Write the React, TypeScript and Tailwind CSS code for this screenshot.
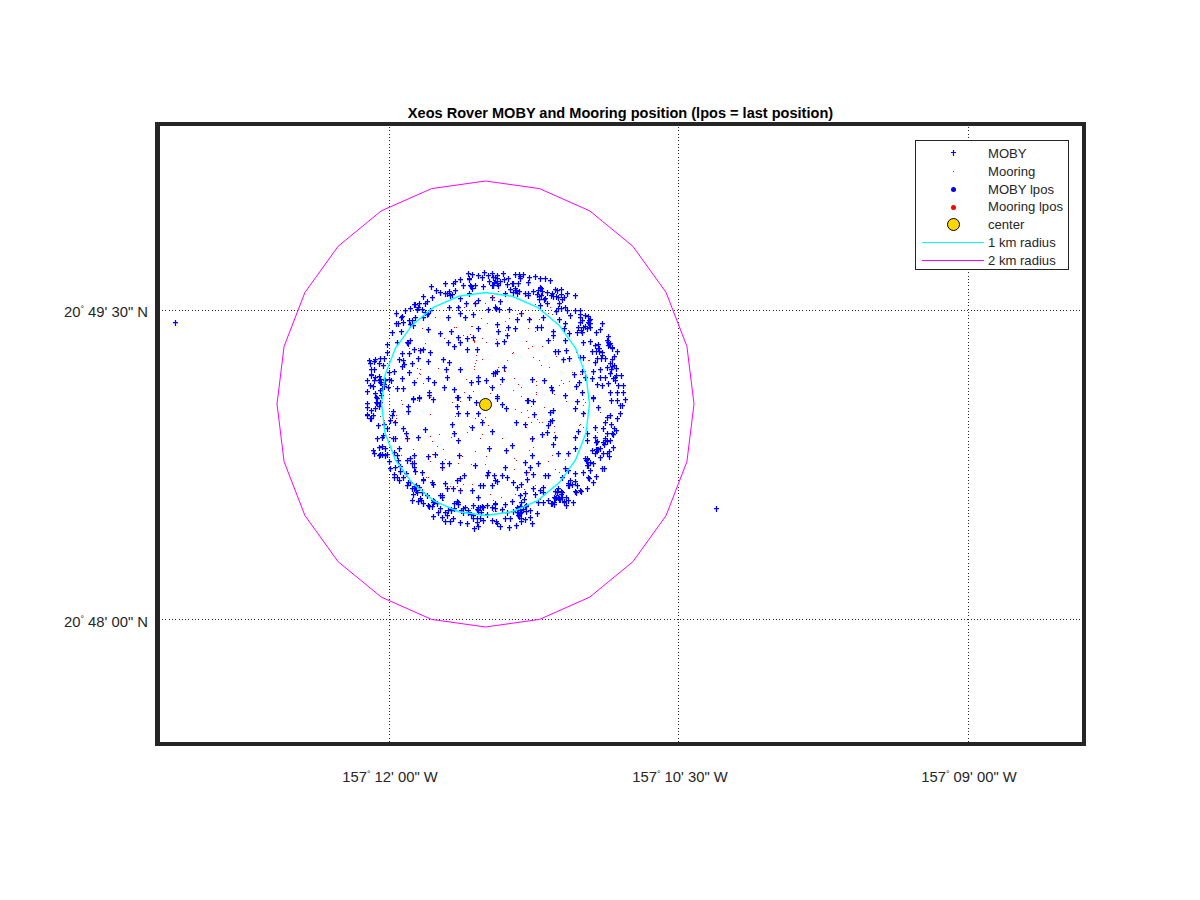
import React from 'react';

type Pt = [number, number];

// Positions read off the plot, stored per quadrant (3x crop coords)
const q1: Pt[] = [[265,172],[355,205],[272,213],[240,220],[293,232],[300,245],[322,235],[340,232],[265,247],[283,258],[322,268],[350,268],[250,297],[268,307],[203,304],[258,327],[300,327],[262,350],[205,355],[163,367],[222,367],[253,380],[282,388],[208,395],[332,365],[355,352],[355,362],[377,360],[395,380],[412,332],[405,340],[292,410],[328,412],[415,212],[412,250],[300,158],[316,172],[340,162],[385,146],[408,143],[345,128],[355,120],[318,128],[295,140],[268,140],[175,295],[130,300],[118,298],[127,318],[133,312],[155,310],[148,337],[103,333],[88,337],[43,327],[58,348],[127,353],[93,360],[130,385],[112,385],[85,380],[88,358],[60,365],[40,378],[30,375],[20,392],[45,398],[48,412],[160,415],[178,412],[208,405],[122,170],[108,188],[130,185],[150,192],[165,170],[190,107],[178,130],[195,130],[200,122],[150,145],[170,147],[186,148],[215,110],[228,90],[240,95],[256,68],[278,70],[285,62],[300,58],[325,40],[310,75],[330,75],[345,75],[355,45],[365,50],[373,35],[385,45],[400,50],[410,45],[395,75],[410,70],[255,100],[270,105],[285,90],[300,115],[190,170],[203,208],[145,250],[140,245],[150,240],[80,252],[112,245],[95,215],[122,212],[113,188],[80,277],[127,278],[148,280],[163,267],[180,270],[188,268],[211,277],[60,295],[73,295],[57,308],[70,315]];
const q2: Pt[] = [[5,40],[15,50],[40,38],[75,42],[100,42],[118,50],[135,48],[150,55],[165,55],[180,60],[8,75],[25,75],[50,72],[85,68],[115,65],[130,92],[150,80],[172,95],[200,90],[195,88],[205,110],[230,100],[215,118],[165,115],[105,100],[45,98],[5,112],[30,123],[15,142],[28,148],[58,148],[92,158],[118,178],[82,178],[160,172],[208,178],[22,192],[55,202],[75,205],[140,202],[152,202],[25,213],[52,225],[43,243],[190,213],[190,225],[175,240],[225,190],[222,205],[225,240],[237,218],[240,165],[255,150],[270,150],[285,165],[270,185],[262,215],[290,205],[318,215],[330,208],[280,247],[195,272],[205,272],[228,270],[218,298],[238,295],[270,290],[280,290],[325,252],[350,240],[355,255],[365,265],[335,285],[320,293],[345,295],[365,298],[315,305],[308,332],[330,328],[352,320],[378,325],[275,332],[253,342],[285,350],[268,365],[258,377],[307,355],[330,350],[360,340],[345,352],[320,372],[335,375],[355,370],[375,360],[385,375],[400,375],[15,335],[10,340],[43,322],[37,358],[5,380],[125,357],[163,360],[183,380],[185,390],[20,408],[110,420],[225,140],[230,150],[170,130],[205,145],[150,135],[360,395],[380,395],[400,395],[310,410],[275,395]];
const q3: Pt[] = [[22,25],[50,10],[160,13],[178,10],[220,13],[293,7],[328,7],[347,22],[290,32],[145,33],[145,48],[293,55],[322,55],[355,55],[275,87],[365,80],[335,97],[395,108],[283,115],[295,135],[388,158],[196,103],[130,98],[138,115],[140,130],[175,127],[105,128],[55,90],[52,130],[70,120],[58,155],[75,160],[65,178],[80,178],[118,160],[103,170],[110,180],[115,195],[88,197],[163,180],[203,183],[226,177],[298,180],[150,190],[140,195],[245,205],[268,205],[345,210],[245,215],[90,220],[105,215],[120,213],[120,228],[103,238],[110,245],[130,245],[138,233],[165,228],[185,230],[190,255],[215,262],[220,268],[150,260],[140,270],[155,280],[160,297],[170,290],[180,310],[185,290],[200,300],[157,315],[175,318],[190,325],[205,330],[220,320],[230,325],[245,300],[255,265],[280,280],[262,280],[300,285],[335,285],[313,240],[300,250],[290,255],[380,240],[385,230],[403,240],[370,270],[360,270],[395,270],[412,258],[355,305],[340,330],[380,330],[405,325],[295,327],[310,340],[325,345],[240,340],[255,350],[265,345],[220,363],[235,350],[245,365],[260,360],[280,370],[300,380],[320,385],[340,370],[350,380],[370,375],[395,375],[408,378],[255,378],[270,378],[45,40],[40,60],[30,70],[100,48],[95,60],[90,75],[105,82],[80,100]];
const q4: Pt[] = [[20,8],[35,28],[48,40],[113,15],[128,18],[133,58],[78,82],[105,87],[180,52],[190,45],[225,0],[262,18],[255,40],[280,55],[310,8],[325,35],[362,15],[380,15],[395,30],[360,60],[350,65],[380,70],[390,55],[345,80],[315,95],[340,100],[365,115],[345,130],[368,155],[180,78],[185,75],[175,90],[172,112],[157,117],[127,130],[5,108],[67,150],[48,165],[190,147],[195,127],[255,125],[265,108],[290,115],[315,125],[290,135],[255,160],[235,175],[205,173],[125,180],[105,200],[145,205],[120,215],[108,230],[45,215],[12,240],[35,240],[50,245],[15,255],[5,270],[130,238],[165,240],[175,240],[110,252],[70,262],[93,268],[80,275],[130,280],[160,275],[150,285],[215,245],[235,270],[255,258],[270,285],[290,280],[260,270],[215,290],[205,280],[330,160],[305,165],[350,175],[330,185],[300,200],[342,220],[310,205],[280,230],[255,235],[235,225],[225,220],[90,300],[105,295],[135,297],[160,290],[175,315],[185,325],[215,305],[250,320],[103,313],[65,318],[45,328],[15,327],[35,342],[50,350],[90,353],[120,345],[140,353],[120,365],[125,385],[20,385],[45,368],[60,368],[30,392],[5,375],[285,190],[300,225]];

const toPage = (pts: Pt[], ox: number, oy: number): Pt[] =>
  pts.map(([x, y]) => [Math.round(ox + x / 3), Math.round(oy + y / 3)]);

// small seeded generator so the picture is the same on every load
let seed = 4711;
const rnd = () => {
  seed = (seed * 16807) % 2147483647;
  return (seed - 1) / 2147483646;
};

const moby: Pt[] = [
  ...toPage(q1, 360, 260),
  ...toPage(q2, 490, 260),
  ...toPage(q3, 360, 395),
  ...toPage(q4, 490, 395),
  [175, 322],
  [716, 508],
];
// dense outer band of the track, in small clumps
for (let i = 0; i < 110; i++) {
  const a = rnd() * Math.PI * 2;
  const r = 0.84 + rnd() * 0.16;
  const cx = 495 + Math.cos(a) * 129 * r;
  const cy = 399 + Math.sin(a) * 128 * r;
  const n = 1 + Math.floor(rnd() * 4);
  for (let k = 0; k < n; k++) {
    moby.push([Math.round(cx + (rnd() - 0.5) * 9), Math.round(cy + (rnd() - 0.5) * 9)]);
  }
}

const mooring: Pt[] = [];
for (let i = 0; i < 230; i++) {
  const a = rnd() * Math.PI * 2;
  const r = Math.sqrt(rnd()) * 0.95;
  mooring.push([Math.round(490 + Math.cos(a) * 118 * r), Math.round(402 + Math.sin(a) * 118 * r)]);
}

const crosses = moby.map(([x, y]) => `M${x - 2} ${y + 0.5}h5M${x + 0.5} ${y - 2}v6`).join('');
const dots = mooring.map(([x, y]) => `M${x} ${y + 0.5}h1`).join('');

const ring = (rx: number, ry: number) =>
  Array.from({ length: 25 }, (_, i) => {
    const a = (i * Math.PI) / 12;
    return `${(485.5 + Math.sin(a) * rx).toFixed(1)},${(404 - Math.cos(a) * ry).toFixed(1)}`;
  }).join(' ');

const gridX = [389.5, 678.5, 968.5];
const gridY = [310.5, 619.5];

const xTicks = [
  { x: 390, deg: '157', rest: ` 12' 00" W` },
  { x: 680, deg: '157', rest: ` 10' 30" W` },
  { x: 969, deg: '157', rest: ` 09' 00" W` },
];
const yTicks = [
  { y: 317, deg: '20', rest: ` 49' 30" N` },
  { y: 627, deg: '20', rest: ` 48' 00" N` },
];

function TickText({ deg, rest }: { deg: string; rest: string }) {
  return (
    <>
      {deg}
      <tspan dy={-5} fontSize={9}>°</tspan>
      <tspan dy={5} xmlSpace="preserve">{rest}</tspan>
    </>
  );
}

const legendRows: { label: string; icon: React.ReactNode }[] = [
  {
    label: 'MOBY',
    icon: (
      <svg width={7} height={7}>
        <path d="M1 2.5h5M3.5 0v6" stroke="#0000ff" strokeWidth={1.2} />
      </svg>
    ),
  },
  { label: 'Mooring', icon: <div className="w-px h-px bg-[#ff0000]" /> },
  { label: 'MOBY lpos', icon: <div className="w-[5px] h-[5px] rounded-full bg-[#0000ff]" /> },
  { label: 'Mooring lpos', icon: <div className="w-[5px] h-[5px] rounded-full bg-[#ff0000]" /> },
  { label: 'center', icon: <div className="w-[13px] h-[13px] rounded-full bg-[#ffd700] border border-black" /> },
  { label: '1 km radius', icon: <div className="w-[62px] h-px bg-[#00ffff]" /> },
  { label: '2 km radius', icon: <div className="w-[62px] h-px bg-[#ff00ff]" /> },
];

export default function App() {
  return (
    <div className="w-[1200px] h-[900px] bg-white pl-[155px] pt-[104px] font-['Liberation_Sans',Arial,sans-serif] text-[#262626] overflow-hidden">
      <div className="w-[931px]">
        <h1 className="h-[18px] text-center text-[14.55px] leading-[18px] font-bold text-black">
          Xeos Rover MOBY and Mooring position (lpos = last position)
        </h1>

        <div className="relative w-[931px] h-[624px] border-[4px] border-l-[5px] border-[#262626]">
          <svg width={922} height={616} viewBox="160 126 922 616" className="block overflow-visible">
            <g stroke="#262626" strokeWidth={1} strokeDasharray="1 2.3" shapeRendering="crispEdges">
              {gridX.map((x) => (
                <line key={x} x1={x} x2={x} y1={127} y2={742} />
              ))}
              {gridY.map((y) => (
                <line key={y} x1={162} x2={1082} y1={y} y2={y} />
              ))}
            </g>

            <path d={crosses} stroke="#0000ff" strokeWidth={1.25} fill="none" />
            <path d={dots} stroke="#ff0000" strokeWidth={1} fill="none" shapeRendering="crispEdges" />

            <polyline points={ring(104, 111.5)} fill="none" stroke="#00ffff" strokeWidth={1.4} />
            <polyline points={ring(208.5, 223)} fill="none" stroke="#ff00ff" strokeWidth={1} />

            <circle cx={485.5} cy={404.5} r={6} fill="#ffd700" stroke="#000" strokeWidth={1} />

            <g fill="#262626" fontSize={14.8}>
              {xTicks.map((t) => (
                <text key={t.x} x={t.x} y={782} textAnchor="middle" xmlSpace="preserve">
                  <TickText deg={t.deg} rest={t.rest} />
                </text>
              ))}
              {yTicks.map((t) => (
                <text key={t.y} x={148} y={t.y} textAnchor="end" xmlSpace="preserve">
                  <TickText deg={t.deg} rest={t.rest} />
                </text>
              ))}
            </g>
          </svg>

          {/* legend sits on top of the grid */}
          <div className="absolute top-[14px] right-[13px] w-[154px] h-[130px] bg-white border border-[#262626] flex flex-col pt-[4px]">
            {legendRows.map((row) => (
              <div key={row.label} className="flex items-center h-[17.9px] pl-[6px]">
                <div className="w-[62px] flex items-center justify-center">{row.icon}</div>
                <span className="ml-[4px] text-[13.1px] leading-none whitespace-nowrap">{row.label}</span>
              </div>
            ))}
          </div>
        </div>
      </div>
    </div>
  );
}
